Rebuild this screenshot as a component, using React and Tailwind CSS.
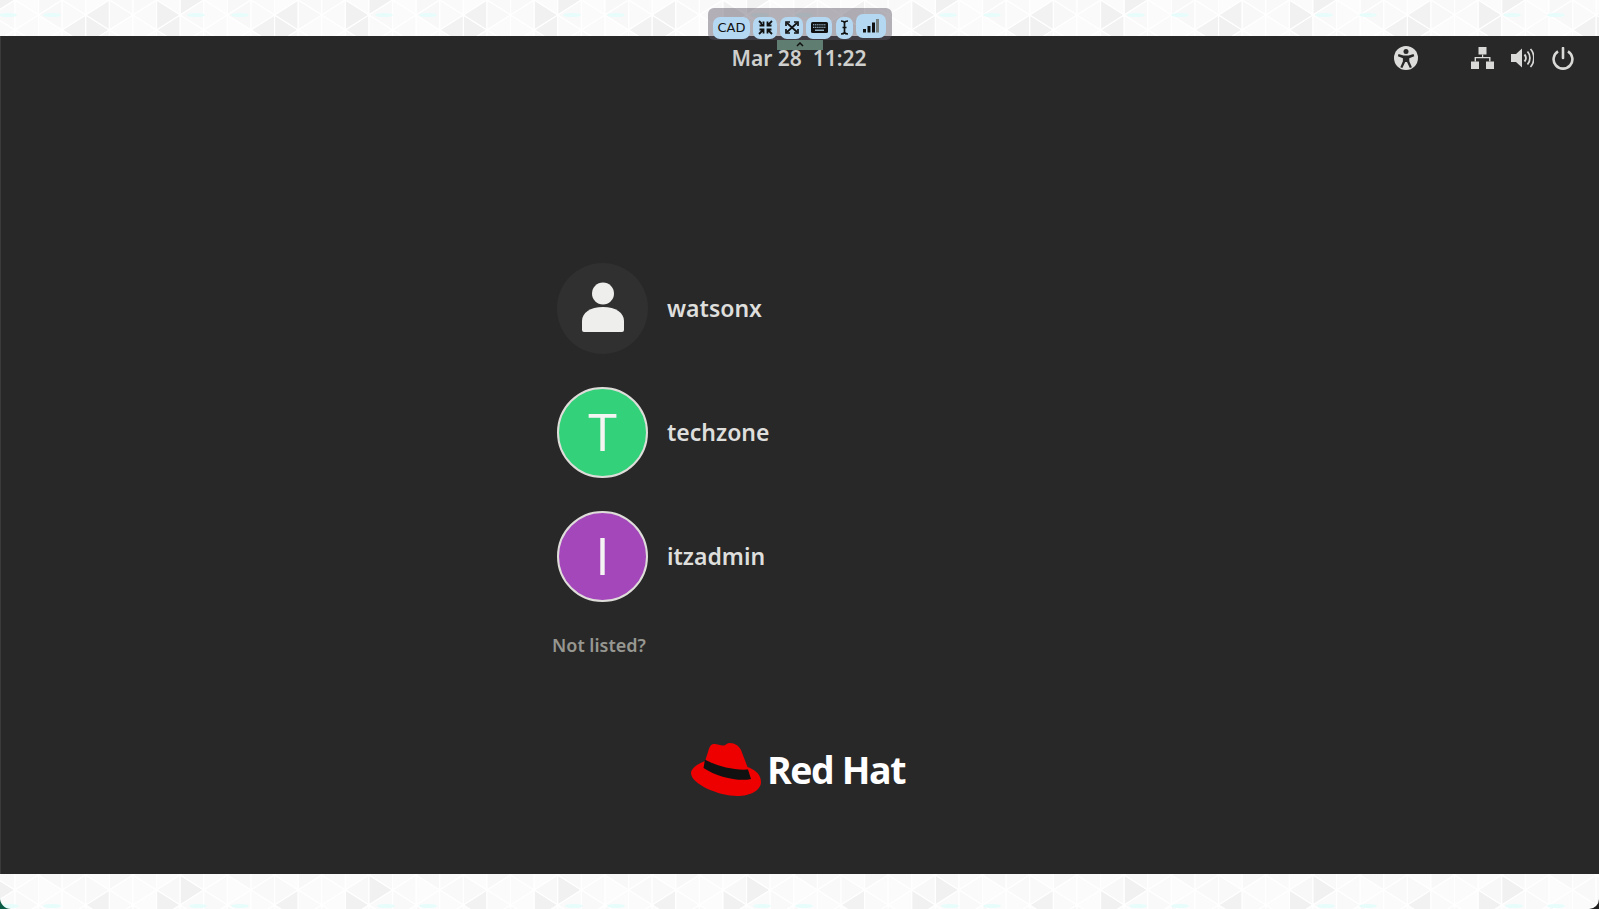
import React from "react";

const COL = 23.6;
const ROW = 30;

// strips repeat every 8 columns, shades are read off the reference
const topDark = ["3:r:0", "6:l:0", "2:r:0", "3:l:0", "6:r:0", "7:l:-1"];
const bottomDark = ["7:l:875", "6:l:890", "3:r:890"];
const shadesA = ["#fbfbfb", "#f9f9f9", "#fcfcfc", "#f8f8f8", "#fafafa"];
const shadesB = ["#fafafa", "#fcfcfc", "#f8f8f8", "#fbfbfb", "#f9f9f9"];

function Pattern({ y0, height, dark, spots, spotY, children }) {
  const tris = [];
  const start = y0 === 0 ? 0 : 860;
  for (let i = -1; i < 70; i++) {
    const x0 = 15 + COL * i;
    const x1 = x0 + COL;
    const odd = Math.abs(i % 2) === 1;
    const leftOff = odd ? 15 : 0;
    const rightOff = odd ? 0 : 15;
    for (let n = -1; n < 3; n++) {
      const ly = start + n * ROW + leftOff;
      const ry = start + n * ROW + rightOff;
      const m = ((i % 8) + 8) % 8;
      const h = (m * 7 + (n + 1) * 5 + n * n) % 5;
      const leftKey = y0 === 0 ? `${m}:l:${n}` : `${m}:l:${ly}`;
      const rightKey = y0 === 0 ? `${m}:r:${n}` : `${m}:r:${ry}`;
      tris.push(
        <polygon
          key={`l${i}${n}`}
          points={`${x0},${ly} ${x0},${ly + ROW} ${x1},${ly + 15}`}
          fill={dark.includes(leftKey) ? "#f1f1f1" : shadesA[h]}
          stroke="#ffffff"
          strokeWidth="1.2"
        />,
        <polygon
          key={`r${i}${n}`}
          points={`${x1},${ry} ${x1},${ry + ROW} ${x0},${ry + 15}`}
          fill={dark.includes(rightKey) ? "#f2f2f2" : shadesB[h]}
          stroke="#ffffff"
          strokeWidth="1.2"
        />
      );
    }
  }
  const dots = [];
  for (let k = 0; k < 9; k++) {
    spots.forEach((s) => {
      dots.push(<ellipse key={`${k}-${s}`} cx={s + k * 188} cy={spotY} rx="9" ry="2" fill="#e6fdfb" />);
    });
  }
  return (
    <svg className="block w-full" height={height} viewBox={`0 ${y0} 1599 ${height}`} preserveAspectRatio="none">
      <rect x="0" y={y0} width="1599" height={height} fill="#fafafa" />
      {tris}
      {dots}
      {children}
    </svg>
  );
}

function ToolButton({ className, children }) {
  return (
    <div className={`flex items-center justify-center rounded-[7px] bg-[#b4d8f1] text-[#111] ${className}`}>
      {children}
    </div>
  );
}

function Toolbar() {
  return (
    <div className="absolute left-[708px] top-[8px] z-10 flex h-[32px] w-[184px] items-center gap-[3px] rounded-[6px] bg-[rgba(90,85,100,0.45)] pl-[5px]">
      <ToolButton className="mt-[7px] h-[22px] w-[37px] font-['DejaVu_Sans',sans-serif] text-[13px]">CAD</ToolButton>
      <ToolButton className="mt-[7px] h-[22px] w-[24px]">
        <svg width="15" height="15" viewBox="0 0 15 15" fill="none" stroke="#111" strokeWidth="1.8">
          <path d="M1 1l4 4M5.500 1.500v4h-4M14 1l-4 4M9.500 1.500v4h4M1 14l4-4M5.500 13.500v-4h-4M14 14l-4-4M9.500 13.500v-4h4" />
        </svg>
      </ToolButton>
      <ToolButton className="mt-[7px] h-[22px] w-[23px]">
        <svg width="14" height="13" viewBox="0 0 14 13" fill="none" stroke="#111" strokeWidth="1.7">
          <path d="M2 2l10 9M12 2L2 11" />
          <path d="M1 5V1h4M13 5V1H9M1 8v4h4M13 8v4H9" />
        </svg>
      </ToolButton>
      <ToolButton className="mt-[7px] h-[22px] w-[26px]">
        <svg width="17" height="11" viewBox="0 0 17 11">
          <rect x="0" y="0" width="17" height="11" rx="1.500" fill="#111" />
          <path d="M2 2.800h13M2 5.300h13" stroke="#b4d8f1" strokeWidth="1" strokeDasharray="1.300 0.800" />
          <path d="M4 8.200h9" stroke="#b4d8f1" strokeWidth="1.200" />
        </svg>
      </ToolButton>
      <ToolButton className="ml-[1px] mt-[7px] h-[22px] w-[17px]">
        <svg width="9" height="15" viewBox="0 0 9 15" fill="none" stroke="#111" strokeWidth="1.700">
          <path d="M1 1c2 0 3 .5 3.500 1.500C5 1.500 6 1 8 1M1 14c2 0 3-.5 3.500-1.500C5 13.500 6 14 8 14M4.500 2v11M2.500 7.500h4" />
        </svg>
      </ToolButton>
      <ToolButton className="mt-[4px] h-[24px] w-[30px]">
        <svg width="16" height="14" viewBox="0 0 16 14">
          <rect x="0" y="10" width="3" height="3.500" fill="#111" />
          <rect x="4.500" y="7" width="3" height="6.500" fill="#111" />
          <rect x="9" y="3.500" width="3" height="10" fill="#111" />
          <rect x="13" y="0" width="3" height="13.500" fill="#77807f" />
        </svg>
      </ToolButton>
      <div className="absolute left-[69px] top-[32px] flex h-[10px] w-[46px] items-start justify-center bg-[#5f7d71]">
        <svg width="8" height="5" viewBox="0 0 8 5" className="mt-[2px]" fill="none" stroke="#111" strokeWidth="1.500">
          <path d="M1 4l3-3 3 3" />
        </svg>
      </div>
    </div>
  );
}

function PersonIcon() {
  return (
    <svg width="44" height="52" viewBox="0 0 44 52" fill="#eeeeec" className="mb-[2px]">
      <circle cx="22" cy="11.500" r="11" />
      <path d="M1 48v-9c0-8 8-14 21-14s21 6 21 14v9a2 2 0 0 1-2 2H3a2 2 0 0 1-2-2z" />
    </svg>
  );
}

function UserRow({ name, avatar }) {
  return (
    <div className="flex h-[91px] items-center gap-[19px]">
      {avatar}
      <span className="text-[23px] font-semibold leading-none text-[#dededc]">{name}</span>
    </div>
  );
}

function LetterAvatar({ letter, color }) {
  return (
    <div className={`flex h-[91px] w-[91px] items-center justify-center rounded-full border-2 border-[#deddda] ${color}`}>
      <span className="pb-[4px] font-['Open_Sans',sans-serif] text-[52px] font-normal leading-none text-[#f4f4f2]">{letter}</span>
    </div>
  );
}

function StatusIcons() {
  return (
    <div className="flex h-full items-center justify-end pr-[25px]">
      <svg width="24" height="24" viewBox="0 0 24 24" className="mr-[53px]">
        <circle cx="12" cy="12" r="12" fill="#dcdcda" />
        <circle cx="12" cy="5.500" r="2.500" fill="#282828" />
        <path d="M4.500 8l5 1.600h5l5-1.600.8 2.200-5 2v3l2.600 6-2.100.9-2.800-6h-1.800l-2.800 6-2.100-.9 2.600-6v-3l-5-2z" fill="#282828" />
      </svg>
      <svg width="23" height="22" viewBox="0 0 23 22" fill="#d9d9d7" className="mr-[17px]">
        <rect x="7.500" y="0" width="8" height="7.500" />
        <rect x="0" y="14.500" width="8" height="7.500" />
        <rect x="15" y="14.500" width="8" height="7.500" />
        <path d="M11 7.500h1.200V10H19.500v4.500h-1.400V11.300H5v3.200H3.600V10H11z" />
      </svg>
      <svg width="23" height="22" viewBox="0 0 23 22" fill="none" className="mr-[18px]">
        <path d="M0 7h5l6-5.500v19L5 15H0z" fill="#d9d9d7" />
        <path d="M13.500 7.500c1.800 2 1.800 5 0 7" stroke="#d9d9d7" strokeWidth="2" />
        <path d="M16.500 4.500c3.200 3.600 3.200 9.400 0 13" stroke="#d9d9d7" strokeWidth="1.800" />
        <path d="M19.500 2c4.500 5 4.500 13 0 18" stroke="#d9d9d7" strokeWidth="1.800" />
      </svg>
      <svg width="22" height="23" viewBox="0 0 22 23" fill="none" stroke="#d9d9d7" strokeWidth="2.600">
        <path d="M11 1v10" strokeLinecap="round" />
        <path d="M6 4.300a9.400 9.400 0 1 0 10 0" />
      </svg>
    </div>
  );
}

function RedHatLogo() {
  return (
    <div className="flex items-center pr-[4px]">
      <svg width="71" height="54" viewBox="0 0 71 54">
        <path
          d="M21 1.500C25 0 29 3 33 2.500C35 2 36 0 39 0C44 0 48 3 50 7L56.500 24C62 26 70 30 70 39C70 47 60 53 46 53C28 53 0 41 0 30C0 26 6 21 14 18L17 9C18 5 19 2.500 21 1.500Z"
          fill="#ee0000"
        />
        <path d="M14 16.500C24 22.500 42 27.500 57 26.500L60 36C48 39 26 34 12.500 25Z" fill="#111111" />
      </svg>
      <span className="ml-[5px] font-['Open_Sans',sans-serif] text-[37.500px] font-bold leading-none tracking-[-1.400px] text-white">
        Red Hat
      </span>
    </div>
  );
}

export default function App() {
  return (
    <div className="relative flex h-screen flex-col overflow-hidden bg-white font-['Noto_Sans',sans-serif]">
      <Toolbar />

      <div className="h-[36px] shrink-0">
        <Pattern y0={0} height={36} dark={topDark} spots={[8, 52]} spotY={15} />
      </div>

      <main className="flex flex-1 flex-col border-l border-[#3b3b3b] bg-[#282828]">
        <header className="grid h-[44px] grid-cols-3 items-center">
          <div />
          <div className="pr-[2px] pt-[2px] text-center text-[21px] font-semibold text-[#cfcfcd]">Mar 28&nbsp;&nbsp;11:22</div>
          <StatusIcons />
        </header>

        <div className="ml-[556px] mt-[183px] flex flex-col gap-[33px]">
          <UserRow
            name="watsonx"
            avatar={
              <div className="flex h-[91px] w-[91px] items-center justify-center rounded-full bg-[#303030]">
                <PersonIcon />
              </div>
            }
          />
          <UserRow name="techzone" avatar={<LetterAvatar letter="T" color="bg-[#33d17a]" />} />
          <UserRow name="itzadmin" avatar={<LetterAvatar letter="I" color="bg-[#a347ba]" />} />
        </div>

        <div className="ml-[551px] mt-[30px] text-[18px] font-semibold leading-[26px] text-[#979791]">Not listed?</div>

        <div className="mt-[85px] flex justify-center">
          <RedHatLogo />
        </div>
      </main>

      <div className="h-[35px] shrink-0">
        <Pattern y0={874} height={35} dark={bottomDark} spots={[10, 52]} spotY={906}>
          <path d="M0 898A11 11 0 0 0 11 909L0 909Z" fill="#0b5c46" />
          <path d="M1599 899A10 10 0 0 1 1589 909L1599 909Z" fill="#222222" />
        </Pattern>
      </div>
    </div>
  );
}
